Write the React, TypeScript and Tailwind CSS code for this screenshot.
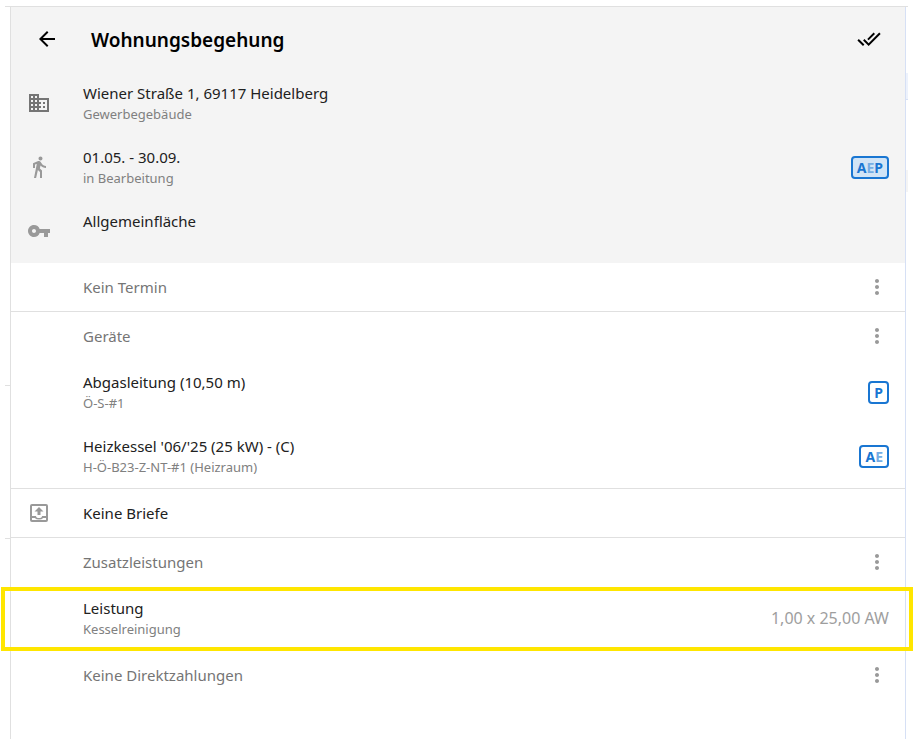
import { type ReactNode } from "react";
import {
  MdArrowBack,
  MdBusiness,
  MdDirectionsWalk,
  MdDoneAll,
  MdMoreVert,
  MdVpnKey,
} from "react-icons/md";

function OutboxIcon() {
  return (
    <svg viewBox="0 0 24 24" className="size-6" fill="currentColor" aria-hidden="true">
      <path
        fillRule="evenodd"
        d="M5 3h14a2 2 0 0 1 2 2v14a2 2 0 0 1-2 2H5a2 2 0 0 1-2-2V5a2 2 0 0 1 2-2zM5 5v10h4a3 2 0 0 0 6 0h4V5zM5 17v2h14v-2h-2.800a5 3.500 0 0 1-8.400 0z"
      />
      <path d="M12 6l4.500 4.500H13.500V14h-3v-3.500H7.500z" />
    </svg>
  );
}

type Letter = { char: string; faded?: boolean };

function Badge({ letters, filled = false }: { letters: Letter[]; filled?: boolean }) {
  return (
    <span
      className={`flex h-[23px] items-center rounded-[4px] border-2 border-[#1976d2] px-1 text-[14px] leading-[19px] font-bold text-[#1976d2] ${
        filled ? "bg-[#d1e4f6]" : "bg-white"
      }`}
    >
      {letters.map((letter) => (
        <span key={letter.char} className={letter.faded ? "text-[#75ade4]" : ""}>
          {letter.char}
        </span>
      ))}
    </span>
  );
}

function Item({
  icon,
  title,
  subtitle,
  children,
}: {
  icon?: ReactNode;
  title: string;
  subtitle?: string;
  children?: ReactNode;
}) {
  return (
    <li className="flex h-16 items-center px-4">
      <span className="flex w-14 shrink-0 text-[#999]">{icon}</span>
      <div className="min-w-0 flex-1 self-start pt-[11px]">
        <p className="text-[15px] leading-[22px] text-[#212121]">{title}</p>
        {subtitle && <p className="text-[13px] leading-5 text-[#808080]">{subtitle}</p>}
      </div>
      {children}
    </li>
  );
}

function SectionHeader({ title }: { title: string }) {
  return (
    <div className="flex h-12 items-center justify-between pr-4 pl-[72px]">
      <h2 className="text-[15px] leading-[22px] text-[#757575]">{title}</h2>
      <button type="button" aria-label={`${title}: Optionen`} className="text-[#999]">
        <MdMoreVert className="size-6" />
      </button>
    </div>
  );
}

export default function App() {
  return (
    <div className="relative min-h-screen bg-white px-[5px] pt-[6px] pr-[6px] font-['Noto_Sans','Open_Sans',sans-serif]">
      <span className="absolute top-[385px] left-[5px] h-px w-[5px] bg-[#e0e0e0]" />
      <span className="absolute top-[538px] left-[5px] h-px w-[5px] bg-[#e0e0e0]" />
      <span className="absolute top-[73px] right-[6px] h-[27px] w-[2px] border-b border-[#d6e0f5] bg-[#edf2fc]" />
      <span className="absolute top-[170px] right-[6px] h-[22px] w-[2px] bg-[#f4f4f4]" />
      <div className="border-t border-[#e0e0e0] pr-[2px] pl-[5px]">
        <main className="min-h-[calc(100vh-7px)] border-r border-l border-r-[#d6e0f5] border-l-[#e0e0e0] bg-white">
          <section className="bg-[#f4f4f4]">
            <header className="flex h-16 items-center px-6">
              <button type="button" aria-label="Zurück" className="text-black">
                <MdArrowBack className="size-6" />
              </button>
              <h1 className="ml-8 flex-1 pt-[2px] text-[19px] leading-7 font-semibold text-black">
                Wohnungsbegehung
              </h1>
              <button type="button" aria-label="Alles erledigt" className="text-black">
                <MdDoneAll className="size-6" />
              </button>
            </header>
            <ul>
              <Item
                icon={<MdBusiness className="size-6 text-[#757575]" />}
                title="Wiener Straße 1, 69117 Heidelberg"
                subtitle="Gewerbegebäude"
              />
              <Item
                icon={<MdDirectionsWalk className="size-6" />}
                title="01.05. - 30.09."
                subtitle="in Bearbeitung"
              >
                <Badge filled letters={[{ char: "A" }, { char: "E", faded: true }, { char: "P" }]} />
              </Item>
              <Item icon={<MdVpnKey className="size-6" />} title="Allgemeinfläche" />
            </ul>
          </section>

          <section className="border-b border-[#e0e0e0]">
            <SectionHeader title="Kein Termin" />
          </section>

          <section className="border-b border-[#e0e0e0]">
            <SectionHeader title="Geräte" />
            <ul>
              <Item title="Abgasleitung (10,50 m)" subtitle="Ö-S-#1">
                <Badge letters={[{ char: "P" }]} />
              </Item>
              <Item title="Heizkessel '06/'25 (25 kW) - (C)" subtitle="H-Ö-B23-Z-NT-#1 (Heizraum)">
                <Badge letters={[{ char: "A" }, { char: "E", faded: true }]} />
              </Item>
            </ul>
          </section>

          <section className="flex h-[49px] items-center border-b border-[#e0e0e0] px-4">
            <span className="w-14 text-[#999]">
              <OutboxIcon />
            </span>
            <h2 className="text-[15px] leading-[22px] text-[#212121]">Keine Briefe</h2>
          </section>

          <section className="border-b border-[#e0e0e0]">
            <SectionHeader title="Zusatzleistungen" />
            <div className="relative">
              <ul>
                <Item title="Leistung" subtitle="Kesselreinigung">
                  <span className="text-[16px] leading-[22px] text-[#9e9e9e]">1,00 x 25,00 AW</span>
                </Item>
              </ul>
              <span
                aria-hidden="true"
                className="pointer-events-none absolute top-px -right-[8px] -bottom-px -left-[10px] border-4 border-[#ffe600]"
              />
            </div>
          </section>

          <section>
            <SectionHeader title="Keine Direktzahlungen" />
          </section>
        </main>
      </div>
    </div>
  );
}
